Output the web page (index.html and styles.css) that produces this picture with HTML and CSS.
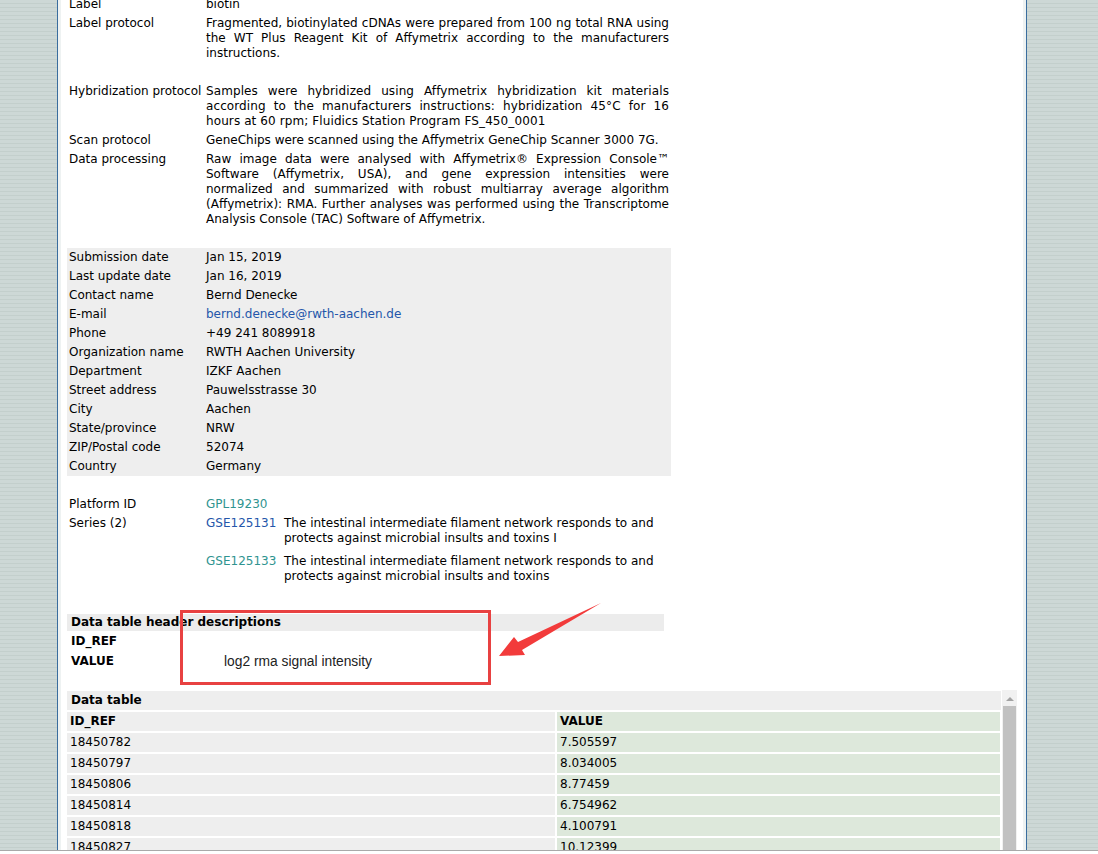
FILE: index.html
```html
<!DOCTYPE html>
<html>
<head>
<meta charset="utf-8">
<link rel="stylesheet" href="styles.css">
</head>
<body>
<div class="page">
  <div class="inner">
    <table class="info">
      <tbody>
        <tr><td class="lbl">Label</td><td class="val">biotin</td></tr>
        <tr><td class="lbl">Label protocol</td><td class="val just">Fragmented, biotinylated cDNAs were prepared from 100 ng total RNA using the WT Plus Reagent Kit of Affymetrix according to the manufacturers instructions.</td></tr>
        <tr class="sp"><td colspan="2"></td></tr>
        <tr><td class="lbl">Hybridization protocol</td><td class="val just wide">Samples were hybridized using Affymetrix hybridization kit materials according to the manufacturers instructions: hybridization 45°C for 16 hours at 60 rpm; Fluidics Station Program FS_450_0001</td></tr>
        <tr><td class="lbl">Scan protocol</td><td class="val just">GeneChips were scanned using the Affymetrix GeneChip Scanner 3000 7G.</td></tr>
        <tr><td class="lbl">Data processing</td><td class="val just">Raw image data were analysed with Affymetrix® Expression Console™ Software (Affymetrix, USA), and gene expression intensities were normalized and summarized with robust multiarray average algorithm (Affymetrix): RMA. Further analyses was performed using the Transcriptome Analysis Console (TAC) Software of Affymetrix.</td></tr>
        <tr class="sp"><td colspan="2"></td></tr>
      </tbody>
      <tbody class="contact">
        <tr><td class="lbl">Submission date</td><td class="val">Jan 15, 2019</td></tr>
        <tr><td class="lbl">Last update date</td><td class="val">Jan 16, 2019</td></tr>
        <tr><td class="lbl">Contact name</td><td class="val">Bernd Denecke</td></tr>
        <tr><td class="lbl">E-mail</td><td class="val"><a class="link" href="#">bernd.denecke@rwth-aachen.de</a></td></tr>
        <tr><td class="lbl">Phone</td><td class="val">+49 241 8089918</td></tr>
        <tr><td class="lbl">Organization name</td><td class="val">RWTH Aachen University</td></tr>
        <tr><td class="lbl">Department</td><td class="val">IZKF Aachen</td></tr>
        <tr><td class="lbl">Street address</td><td class="val">Pauwelsstrasse 30</td></tr>
        <tr><td class="lbl">City</td><td class="val">Aachen</td></tr>
        <tr><td class="lbl">State/province</td><td class="val">NRW</td></tr>
        <tr><td class="lbl">ZIP/Postal code</td><td class="val">52074</td></tr>
        <tr><td class="lbl">Country</td><td class="val">Germany</td></tr>
      </tbody>
      <tbody>
        <tr class="sp"><td colspan="2"></td></tr>
        <tr><td class="lbl">Platform ID</td><td class="val"><a class="visited" href="#">GPL19230</a></td></tr>
        <tr><td class="lbl">Series (2)</td>
          <td class="val">
            <div class="series">
              <div class="srow"><a class="link acc" href="#">GSE125131</a><span class="stitle">The intestinal intermediate filament network responds to and protects against microbial insults and toxins I</span></div>
              <div class="srow"><a class="visited acc" href="#">GSE125133</a><span class="stitle">The intestinal intermediate filament network responds to and protects against microbial insults and toxins</span></div>
            </div>
          </td>
        </tr>
      </tbody>
    </table>

    <table class="desc">
      <tr class="dhead"><td colspan="2">Data table header descriptions</td></tr>
      <tr><td class="dk">ID_REF</td><td class="dv"></td></tr>
      <tr><td class="dk">VALUE</td><td class="dv">log2 rma signal intensity</td></tr>
    </table>

    <div class="dtwrap">
      <div class="dtarea">
        <div class="dtbar">Data table</div>
        <table class="dt">
          <tr class="hdr"><td class="c1">ID_REF</td><td class="c2">VALUE</td></tr>
          <tr><td class="c1">18450782</td><td class="c2">7.505597</td></tr>
          <tr><td class="c1">18450797</td><td class="c2">8.034005</td></tr>
          <tr><td class="c1">18450806</td><td class="c2">8.77459</td></tr>
          <tr><td class="c1">18450814</td><td class="c2">6.754962</td></tr>
          <tr><td class="c1">18450818</td><td class="c2">4.100791</td></tr>
          <tr><td class="c1">18450827</td><td class="c2">10.12399</td></tr>
          <tr><td class="c1">18450838</td><td class="c2">9.812042</td></tr>
        </table>
      </div>
      <div class="sbar">
        <div class="sup"></div>
        <div class="thumb"></div>
      </div>
    </div>
  </div>
</div>

<svg class="annot" width="1098" height="854" viewBox="0 0 1098 854">
  <rect x="181.5" y="611.5" width="308" height="72" fill="none" stroke="#e84141" stroke-width="3"/>
  <polygon points="499,656 514,637 518,642 601,603 522,650 525,655" fill="#f23b3b"/>
</svg>

<div class="edge"></div>
</body>
</html>
```

FILE: styles.css
```css
html, body {
  margin: 0;
  padding: 0;
  height: 854px;
  overflow: hidden;
}

body {
  position: relative;
  background: repeating-linear-gradient(to bottom, #cdd8d6 0px, #cdd8d6 3px, #c3cfcc 3px, #c3cfcc 4px);
  font-family: "DejaVu Sans", Verdana, sans-serif;
  font-size: 12px;
  line-height: 15px;
  color: #000;
}

.page {
  margin-left: 57px;
  width: 968px;
  min-height: 854px;
  border-left: 1px solid #3a6d9e;
  border-right: 1px solid #3a6d9e;
  background: #fff;
}

.inner {
  min-height: 854px;
  border-left: 3px solid #eef2f2;
  border-right: 3px solid #eef2f2;
  padding: 0 6px;
}

.info {
  margin-top: -5px;
  width: 604px;
  border-collapse: collapse;
  table-layout: fixed;
}

.info td {
  padding: 2px;
  vertical-align: top;
}

.info td.lbl {
  width: 133px;
  white-space: nowrap;
}

.info td.just {
  text-align: justify;
}

.info td.wide {
  letter-spacing: 0.1px;
}

.info tr.sp td {
  height: 15px;
}

.contact td {
  background: #eeeeee;
}

a {
  text-decoration: none;
}

.link {
  color: #2456aa;
}

.visited {
  color: #2f9490;
}

.series {
  display: flex;
  flex-direction: column;
  gap: 8px;
}

.srow {
  display: flex;
}

.acc {
  width: 78px;
  flex: none;
}

.stitle {
  flex: 1;
}

.desc {
  margin-top: 28px;
  width: 597px;
  border-collapse: collapse;
}

.desc td {
  padding: 3px 4px 2px 4px;
  font-weight: bold;
}

.desc tr.dhead td {
  background: #ececec;
  padding: 1px 4px;
}

.desc td.dk {
  width: 145px;
}

.desc td.dv {
  font-family: "Liberation Sans", Arial, sans-serif;
  font-weight: normal;
  font-size: 13.8px;
  color: #222;
}

.dtwrap {
  margin-top: 20px;
  display: flex;
  height: 200px;
}

.dtarea {
  flex: 1;
  overflow: hidden;
}

.dtbar {
  background: #eeeeee;
  font-weight: bold;
  padding: 2px 4px;
  margin-right: 1px;
}

.dt {
  border-collapse: separate;
  border-spacing: 2px;
  margin: 0 -1px 0 -2px;
  width: 937px;
}

.dt td {
  padding: 2px 3px;
  height: 15px;
}

.dt td.c1 {
  width: 482px;
  background: #eeeeee;
}

.dt td.c2 {
  background: #dde8db;
}

.dt tr.hdr td {
  font-weight: bold;
}

.sbar {
  width: 15px;
  background: #f1f1f1;
  display: flex;
  flex-direction: column;
  align-items: center;
  margin-top: -1px;
}

.sup {
  width: 0;
  height: 0;
  margin-top: 7px;
  border-left: 4px solid transparent;
  border-right: 4px solid transparent;
  border-bottom: 4px solid #a3a3a3;
}

.thumb {
  margin-top: 5px;
  width: 13px;
  flex: 1;
  background: #c1c1c1;
}

.annot {
  position: absolute;
  left: 0;
  top: 0;
  pointer-events: none;
}

.edge {
  position: fixed;
  left: 0;
  right: 0;
  bottom: 0;
  height: 3px;
  background: #ffffff;
  border-top: 1px solid #a9a9a9;
}
```
